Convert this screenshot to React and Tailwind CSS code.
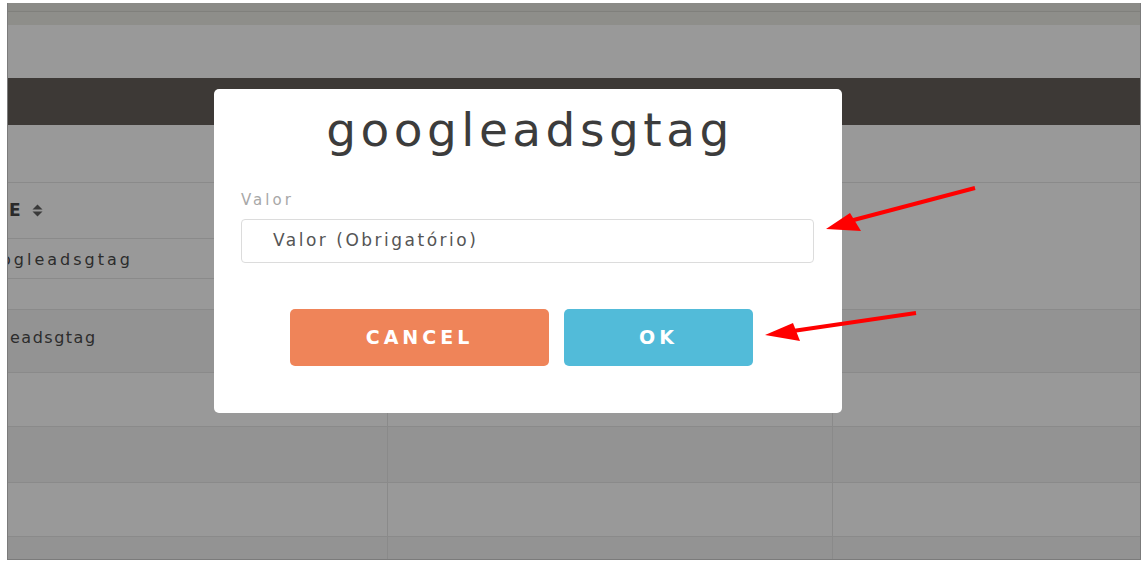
import React from 'react';

const font = { fontFamily: '"DejaVu Sans", sans-serif' };

const SortIcon = () => (
  <svg width="11" height="13" viewBox="0 0 11 13" className="ml-[11px]">
    <path d="M5.5 0.5 L10.5 5.5 L0.5 5.5 Z" fill="#3a3a3a" />
    <path d="M5.5 12.5 L10.5 7.5 L0.5 7.5 Z" fill="#3a3a3a" />
  </svg>
);

const Arrows = () => (
  <svg className="absolute inset-0 pointer-events-none" width="1143" height="566">
    <line x1="975" y1="188" x2="846" y2="222" stroke="#ff0000" strokeWidth="4" />
    <polygon points="826,229 850,213 861,231" fill="#ff0000" />
    <line x1="916" y1="313" x2="786" y2="332" stroke="#ff0000" strokeWidth="4" />
    <polygon points="765,335 793,323 800,341" fill="#ff0000" />
  </svg>
);

const Row = ({ h, dark, children }) => (
  <div className={`grid grid-cols-[380px_445px_1fr] border-b border-[#8a8a8a] ${dark ? 'bg-[#939393]' : 'bg-[#999999]'} ${h}`}>
    <div className="border-r border-[#8a8a8a] overflow-hidden">{children}</div>
    <div className="border-r border-[#8a8a8a]" />
    <div />
  </div>
);

export default function App() {
  return (
    <div className="relative w-[1143px] h-[566px] bg-white overflow-hidden" style={font}>
      {/* dimmed page behind the modal */}
      <div className="ml-[7px] mt-[3px] w-[1134px] h-[557px] border-l border-r border-b border-[#7b7b7b] overflow-hidden flex flex-col">
        <div className="h-[8px] bg-[#8b8b87]" />
        <div className="h-[1px] bg-[#80807c]" />
        <div className="h-[13px] bg-[#8e8e8a]" />
        <div className="h-[53px] bg-[#999999]" />
        <div className="h-[47px] bg-[#3d3936]" />
        <div className="h-[58px] bg-[#999999] border-b border-[#8a8a8a]" />

        <div className="grid grid-cols-[380px_445px_1fr] h-[127px] border-b border-[#8a8a8a] bg-[#999999]">
          <div className="border-r border-[#8a8a8a] flex flex-col overflow-hidden">
            <div className="h-[56px] border-b border-[#8a8a8a] flex items-center pl-[1px]">
              <span className="text-[17px] font-bold text-[#2a2a2a]">E</span>
              <SortIcon />
            </div>
            <div className="h-[40px] border-b border-[#8a8a8a] flex items-center pt-[2px]">
              <span className="ml-[-7px] text-[16px] tracking-[3px] text-[#2c2c2c] whitespace-nowrap">ogleadsgtag</span>
            </div>
            <div className="flex-1" />
          </div>
          <div className="border-r border-[#8a8a8a]" />
          <div />
        </div>

        <Row h="h-[63px]" dark>
          <div className="h-full flex items-center pl-[2px] pb-[6px]">
            <span className="text-[16px] tracking-[1.5px] text-[#2c2c2c] whitespace-nowrap">eadsgtag</span>
          </div>
        </Row>
        <Row h="h-[54px]" />
        <Row h="h-[56px]" dark />
        <Row h="h-[54px]" />
        <div className="flex-1 grid grid-cols-[380px_445px_1fr] bg-[#939393]">
          <div className="border-r border-[#8a8a8a]" />
          <div className="border-r border-[#8a8a8a]" />
          <div />
        </div>
      </div>

      {/* modal */}
      <div className="absolute left-[214px] top-[89px] w-[628px] h-[324px] bg-white rounded-[5px] flex flex-col">
        <h2 className="mt-[13px] pl-[4px] text-center text-[47px] font-normal leading-[56px] tracking-[4.5px] text-[#3c3c3c]">
          googleadsgtag
        </h2>
        <div className="px-[27px] mt-[33px]">
          <label className="block text-[15px] leading-[18px] tracking-[3px] text-[#a8a8a8]">Valor</label>
          <div className="mt-[10px] h-[44px] w-[573px] border border-[#dcdcdc] rounded-[4px] flex items-center pl-[31px]">
            <span className="text-[17px] tracking-[2.5px] text-[#555555]">Valor (Obrigatório)</span>
          </div>
        </div>
        <div className="flex gap-[15px] pl-[76px] mt-[46px]">
          <button className="w-[259px] h-[57px] rounded-[5px] bg-[#ef8459] text-white text-[19px] font-bold tracking-[4px]">
            CANCEL
          </button>
          <button className="w-[189px] h-[57px] rounded-[5px] bg-[#52bbd9] text-white text-[19px] font-bold tracking-[4px]">
            OK
          </button>
        </div>
      </div>

      <Arrows />
    </div>
  );
}
